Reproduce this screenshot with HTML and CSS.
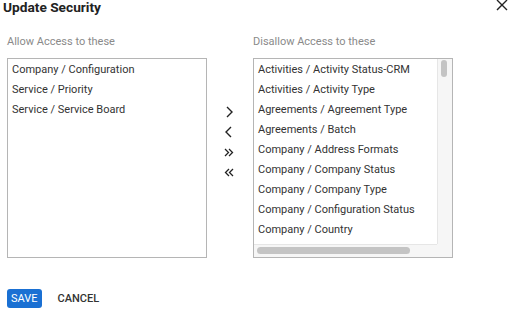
FILE: index.html
```html
<!DOCTYPE html>
<html>
	<head>
		<meta charset="utf-8">
		<title>Update Security</title>
		<link rel="stylesheet" href="styles.css">
	</head>
	<body>
		<div class="dialog">
			<div class="head">
				<h1 class="title">Update Security</h1>
				<a href="javascript:;" class="close">
					<svg width="12" height="12" viewBox="0 0 12 12"><path d="M1 1L11 11M11 1L1 11" stroke="#222" stroke-width="1.4" fill="none"/></svg>
				</a>
			</div>
			<div class="picker">
				<div class="col">
					<div class="label">Allow Access to these</div>
					<div class="box">
						<ul class="list">
							<li>Company / Configuration</li>
							<li>Service / Priority</li>
							<li>Service / Service Board</li>
						</ul>
					</div>
				</div>
				<div class="moves">
					<a href="javascript:;"><svg width="10" height="12" viewBox="0 0 10 12"><path d="M3 1L8 6L3 11" stroke="#222" stroke-width="1.4" fill="none"/></svg></a>
					<a href="javascript:;"><svg width="10" height="12" viewBox="0 0 10 12"><path d="M7 1L2 6L7 11" stroke="#222" stroke-width="1.4" fill="none"/></svg></a>
					<a href="javascript:;"><svg width="10" height="12" viewBox="0 0 10 12"><path d="M1 3L4.5 6.5L1 10M5 3L8.5 6.5L5 10" stroke="#222" stroke-width="1.3" fill="none"/></svg></a>
					<a href="javascript:;"><svg width="10" height="12" viewBox="0 0 10 12"><path d="M5 3L1.5 6.5L5 10M9 3L5.5 6.5L9 10" stroke="#222" stroke-width="1.3" fill="none"/></svg></a>
				</div>
				<div class="col">
					<div class="label">Disallow Access to these</div>
					<div class="box scroll">
						<ul class="list">
							<li>Activities / Activity Status-CRM</li>
							<li>Activities / Activity Type</li>
							<li>Agreements / Agreement Type</li>
							<li>Agreements / Batch</li>
							<li>Company / Address Formats</li>
							<li>Company / Company Status</li>
							<li>Company / Company Type</li>
							<li>Company / Configuration Status</li>
							<li>Company / Country</li>
						</ul>
						<div class="vbar"><span></span></div>
						<div class="hbar"><span></span></div>
						<div class="corner"></div>
					</div>
				</div>
			</div>
			<div class="actions">
				<button class="btn save">SAVE</button>
				<button class="btn cancel">CANCEL</button>
			</div>
		</div>
	</body>
</html>
```
FILE: styles.css
```css
body {
	margin: 0;
	font-family: Roboto, "Liberation Sans", sans-serif;
	color: #333;
	background: #fff;
}
ul {
	margin: 0;
	padding: 0;
	list-style: none;
}
.dialog {
	width: 513px;
	height: 314px;
	overflow: hidden;
}
.head {
	display: flex;
	justify-content: space-between;
	align-items: flex-start;
	height: 34px;
}
.title {
	margin: 0;
	padding-left: 3px;
	font-size: 13.7px;
	line-height: 14px;
	font-weight: 700;
	color: #222;
}
.close {
	display: block;
	margin: -1px 5px 0 0;
	padding: 0;
	line-height: 0;
}
.picker {
	display: grid;
	grid-template-columns: 200px 46px 200px;
	padding-left: 7px;
}
.label {
	font-size: 11px;
	line-height: 14px;
	color: #8a8a8a;
	height: 24px;
	padding-top: 1px;
	box-sizing: border-box;
}
.box {
	box-sizing: border-box;
	height: 200px;
	border: 1px solid #b5b5b5;
	overflow: hidden;
}
.list {
	padding: 1px 0 0 4px;
}
.list li {
	font-size: 11px;
	line-height: 20px;
	color: #333;
	white-space: nowrap;
}
.scroll {
	display: grid;
	grid-template-columns: 1fr 15px;
	grid-template-rows: 1fr 13px;
}
.scroll .list {
	overflow: hidden;
}
.vbar {
	background: #f6f6f6;
	border-left: 1px solid #e6e6e6;
	padding: 1px 0 0 3px;
}
.vbar span {
	display: block;
	width: 6px;
	height: 17px;
	border-radius: 3px;
	background: #c4c4c4;
}
.hbar {
	background: #f6f6f6;
	border-top: 1px solid #e6e6e6;
	padding: 2px 0 0 3px;
}
.hbar span {
	display: block;
	width: 153px;
	height: 7px;
	border-radius: 4px;
	background: #c4c4c4;
}
.corner {
	background: #f6f6f6;
}
.moves {
	display: flex;
	flex-direction: column;
	align-items: center;
	padding: 72px 3px 0 0;
	gap: 8px;
}
.moves a {
	display: block;
	line-height: 0;
}
.actions {
	display: flex;
	gap: 12px;
	padding: 31px 0 0 7px;
}
.btn {
	font-family: Roboto, "Liberation Sans", sans-serif;
	font-size: 11px;
	font-weight: 500;
	height: 19px;
	padding: 0 4px;
	border: none;
	border-radius: 3px;
	background: none;
	cursor: pointer;
}
.save {
	background: #1a70d3;
	color: #fff;
	font-weight: 400;
}
.cancel {
	color: #333;
}
```
